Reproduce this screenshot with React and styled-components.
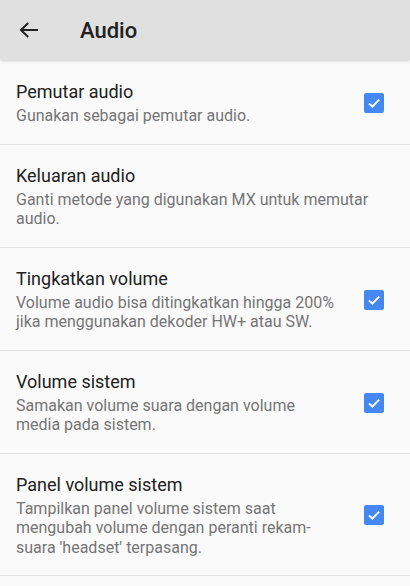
import React from "react";
import styled, { createGlobalStyle } from "styled-components";

const GlobalStyle = createGlobalStyle`
  html, body {
    margin: 0;
    padding: 0;
    background: #fafafa;
  }
  body {
    font-family: Roboto, "Noto Sans", sans-serif;
    -webkit-font-smoothing: antialiased;
  }
`;

const items = [
  {
    id: "player",
    title: "Pemutar audio",
    summary: "Gunakan sebagai pemutar audio.",
    checkbox: true,
  },
  {
    id: "output",
    title: "Keluaran audio",
    summary: "Ganti metode yang digunakan MX untuk memutar audio.",
    checkbox: false,
  },
  {
    id: "boost",
    title: "Tingkatkan volume",
    summary:
      "Volume audio bisa ditingkatkan hingga 200% jika menggunakan dekoder HW+ atau SW.",
    checkbox: true,
  },
  {
    id: "system",
    title: "Volume sistem",
    summary: "Samakan volume suara dengan volume media pada sistem.",
    checkbox: true,
  },
  {
    id: "panel",
    title: "Panel volume sistem",
    summary:
      "Tampilkan panel volume sistem saat mengubah volume dengan peranti rekam-suara 'headset' terpasang.",
    checkbox: true,
  },
];

function BackArrow() {
  return (
    <svg width="20" height="18" viewBox="0 0 20 18" fill="none">
      <path
        d="M19 9H2.2M9.2 2L2 9l7.2 7"
        stroke="#212121"
        strokeWidth="2"
      />
    </svg>
  );
}

function CheckBox() {
  return (
    <Box>
      <svg width="14" height="14" viewBox="0 0 14 14" fill="none">
        <path d="M2 7.4l3.3 3.2L12.2 3.6" stroke="#fff" strokeWidth="2" />
      </svg>
    </Box>
  );
}

export default function App() {
  return (
    <>
      <GlobalStyle />
      <Screen>
        <Toolbar>
          <BackButton>
            <BackArrow />
          </BackButton>
          <ToolbarTitle>Audio</ToolbarTitle>
        </Toolbar>
        <List>
          {items.map((item) => (
            <Row key={item.id}>
              <Texts>
                <Title>{item.title}</Title>
                <Summary>{item.summary}</Summary>
              </Texts>
              {item.checkbox && (
                <Widget>
                  <CheckBox />
                </Widget>
              )}
            </Row>
          ))}
        </List>
      </Screen>
    </>
  );
}

const Screen = styled.div`
  width: 410px;
  min-height: 586px;
  background: #fafafa;
  overflow: hidden;
`;

const Toolbar = styled.div`
  position: relative;
  z-index: 1;
  display: flex;
  align-items: center;
  height: 60px;
  background: #e0e0e0;
  box-shadow: 0 1px 3px rgba(0, 0, 0, 0.18);
`;

const BackButton = styled.div`
  display: flex;
  align-items: center;
  justify-content: center;
  width: 20px;
  margin-left: 19px;
  margin-right: 41px;
`;

const ToolbarTitle = styled.div`
  font-size: 22px;
  font-weight: 500;
  color: #212121;
`;

const List = styled.div`
  display: flex;
  flex-direction: column;
  padding-top: 1px;
`;

const Row = styled.div`
  display: flex;
  align-items: center;
  padding: 20px 26px 18px 16px;
  border-bottom: 1px solid #e3e3e3;
`;

const Texts = styled.div`
  flex: 1;
  min-width: 0;
  display: flex;
  flex-direction: column;
  gap: 3px;
`;

const Title = styled.div`
  font-size: 18px;
  line-height: 22px;
  color: #212121;
`;

const Summary = styled.div`
  font-size: 16px;
  line-height: 19.5px;
  color: #757575;
`;

const Widget = styled.div`
  flex: none;
  width: 20px;
  margin-left: 24px;
  display: flex;
  justify-content: center;
`;

const Box = styled.div`
  width: 20px;
  height: 20px;
  border-radius: 2px;
  background: #4688f1;
  display: flex;
  align-items: center;
  justify-content: center;
`;
